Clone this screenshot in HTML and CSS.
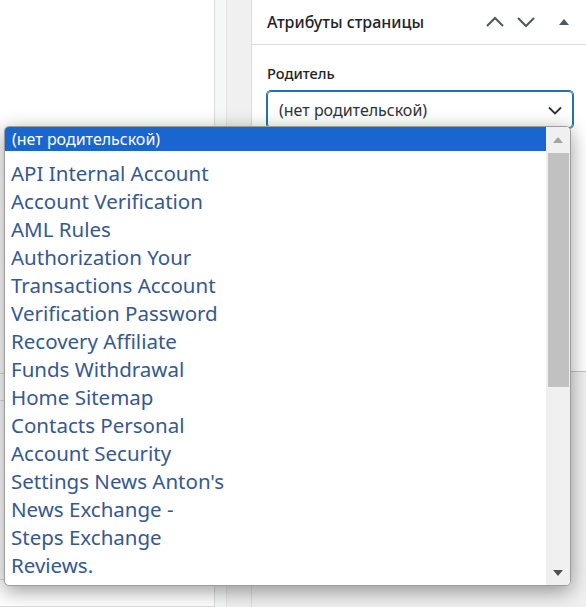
FILE: index.html
```html
<!DOCTYPE html>
<html lang="ru">
<head>
<meta charset="utf-8">
<title>Атрибуты страницы</title>
<link rel="stylesheet" href="styles.css">
</head>
<body>
<div class="screen">
  <main class="main">
    <div class="main-top"></div>
    <div class="main-row"></div>
    <div class="main-row tall"></div>
    <div class="main-row"></div>
  </main>
  <div class="gutter">
    <div class="g1"></div>
    <div class="g2"></div>
  </div>
  <aside class="sidebar">
    <section class="panel">
      <div class="panel-head">
        <h2 class="panel-title">Атрибуты страницы</h2>
        <div class="handles">
          <svg class="h-icon" width="20" height="20" viewBox="0 0 20 20"><path d="M2 14 L10 6 L18 14" fill="none" stroke="#50575e" stroke-width="2"/></svg>
          <svg class="h-icon" width="20" height="20" viewBox="0 0 20 20"><path d="M2 6 L10 14 L18 6" fill="none" stroke="#50575e" stroke-width="2"/></svg>
          <svg class="h-icon tri" width="20" height="20" viewBox="0 0 20 20"><path d="M5 13 L10 7 L15 13 Z" fill="#50575e"/></svg>
        </div>
      </div>
      <div class="panel-body">
        <p class="label">Родитель</p>
        <div class="select">
          <span class="select-value">(нет родительской)</span>
          <svg width="16" height="16" viewBox="0 0 16 16"><path d="M2 5.5 L8 11.5 L14 5.5" fill="none" stroke="#2c3338" stroke-width="1.8"/></svg>
        </div>
      </div>
    </section>
  </aside>

  <div class="dropdown">
    <div class="options">
      <div class="opt selected">(нет родительской)</div>
      <ul class="opt-list">
        <li>API Internal Account</li>
        <li>Account Verification</li>
        <li>AML Rules</li>
        <li>Authorization Your</li>
        <li>Transactions Account</li>
        <li>Verification Password</li>
        <li>Recovery Affiliate</li>
        <li>Funds Withdrawal</li>
        <li>Home Sitemap</li>
        <li>Contacts Personal</li>
        <li>Account Security</li>
        <li>Settings News Anton's</li>
        <li>News Exchange -</li>
        <li>Steps Exchange</li>
        <li>Reviews.</li>
      </ul>
    </div>
    <div class="scrollbar">
      <div class="sb-btn"><svg width="10" height="6" viewBox="0 0 10 6"><path d="M0 6 L5 0 L10 6 Z" fill="#a3a3a3"/></svg></div>
      <div class="sb-track"><div class="sb-thumb"></div></div>
      <div class="sb-btn down"><svg width="10" height="6" viewBox="0 0 10 6"><path d="M0 0 L5 6 L10 0 Z" fill="#505050"/></svg></div>
    </div>
  </div>
</div>
</body>
</html>
```
FILE: styles.css
```css
* { box-sizing: border-box; }
html, body { margin: 0; padding: 0; }
body {
  font-family: "Noto Sans", "Open Sans", sans-serif;
  background: #fff;
  color: #1d2327;
}
.screen {
  position: relative;
  display: flex;
  width: 586px;
  height: 607px;
  overflow: hidden;
}
.main {
  width: 215px;
  border-right: 1px solid #dcdcde;
  background: #fff;
  display: flex;
  flex-direction: column;
}
.main-top { height: 384px; border-bottom: 1px solid #dcdcde; }
.main-row { height: 28px; border-bottom: 1px solid #dcdcde; }
.main-row.tall { height: 183px; }
.gutter { display: flex; width: 36px; }
.g1 { width: 12px; background: #f6f7f7; border-right: 1px solid #e4e4e6; }
.g2 { width: 24px; background: #f0f0f1; }
.sidebar {
  width: 335px;
  border-left: 1px solid #dcdcde;
  background: #f0f0f1;
}
.panel {
  height: 372px;
  background: #fff;
  border-bottom: 1px solid #c3c4c7;
}
.panel-head {
  height: 45px;
  border-bottom: 1px solid #dcdcde;
  display: flex;
  align-items: center;
  justify-content: space-between;
  padding: 0 12px 0 15px;
}
.panel-title {
  margin: 0;
  font-size: 16px;
  font-weight: 500;
  color: #1d2327;
}
.handles { display: flex; gap: 11px; align-items: center; }
.h-icon.tri { margin-left: 7px; }
.panel-body { padding: 18px 13px 0 15px; }
.label {
  margin: 0 0 8px;
  font-size: 14.6px;
  font-weight: 500;
  line-height: 20px;
  color: #1d2327;
}
.select {
  height: 37px;
  border: 1px solid #2271b1;
  box-shadow: 0 0 0 1px #2271b1;
  border-radius: 4px;
  display: flex;
  align-items: center;
  justify-content: space-between;
  padding: 0 9px 0 11px;
}
.select-value { font-size: 16px; color: #2c3338; }

.dropdown {
  position: absolute;
  left: 4px;
  top: 126px;
  width: 567px;
  height: 460px;
  background: #fff;
  border: 1px solid #9c9c9c;
  border-radius: 5px;
  box-shadow: 0 5px 20px rgba(0,0,0,0.4);
  display: flex;
  overflow: hidden;
}
.options { flex: 1; }
.opt.selected {
  height: 24px;
  line-height: 24px;
  background: #1a66d0;
  color: #fff;
  font-size: 16px;
  padding-left: 7px;
}
.opt-list {
  list-style: none;
  margin: 0;
  padding: 8px 0 0 6px;
}
.opt-list li {
  font-size: 20.5px;
  line-height: 28px;
  color: #34598f;
  white-space: nowrap;
}
.scrollbar {
  width: 24px;
  background: #f0f0f0;
  display: flex;
  flex-direction: column;
}
.sb-btn {
  height: 26px;
  display: flex;
  align-items: center;
  justify-content: center;
}
.sb-btn.down { height: 24px; }
.sb-track { flex: 1; padding: 0 1px 0 2px; }
.sb-thumb { height: 234px; background: #c1c1c1; }
```
